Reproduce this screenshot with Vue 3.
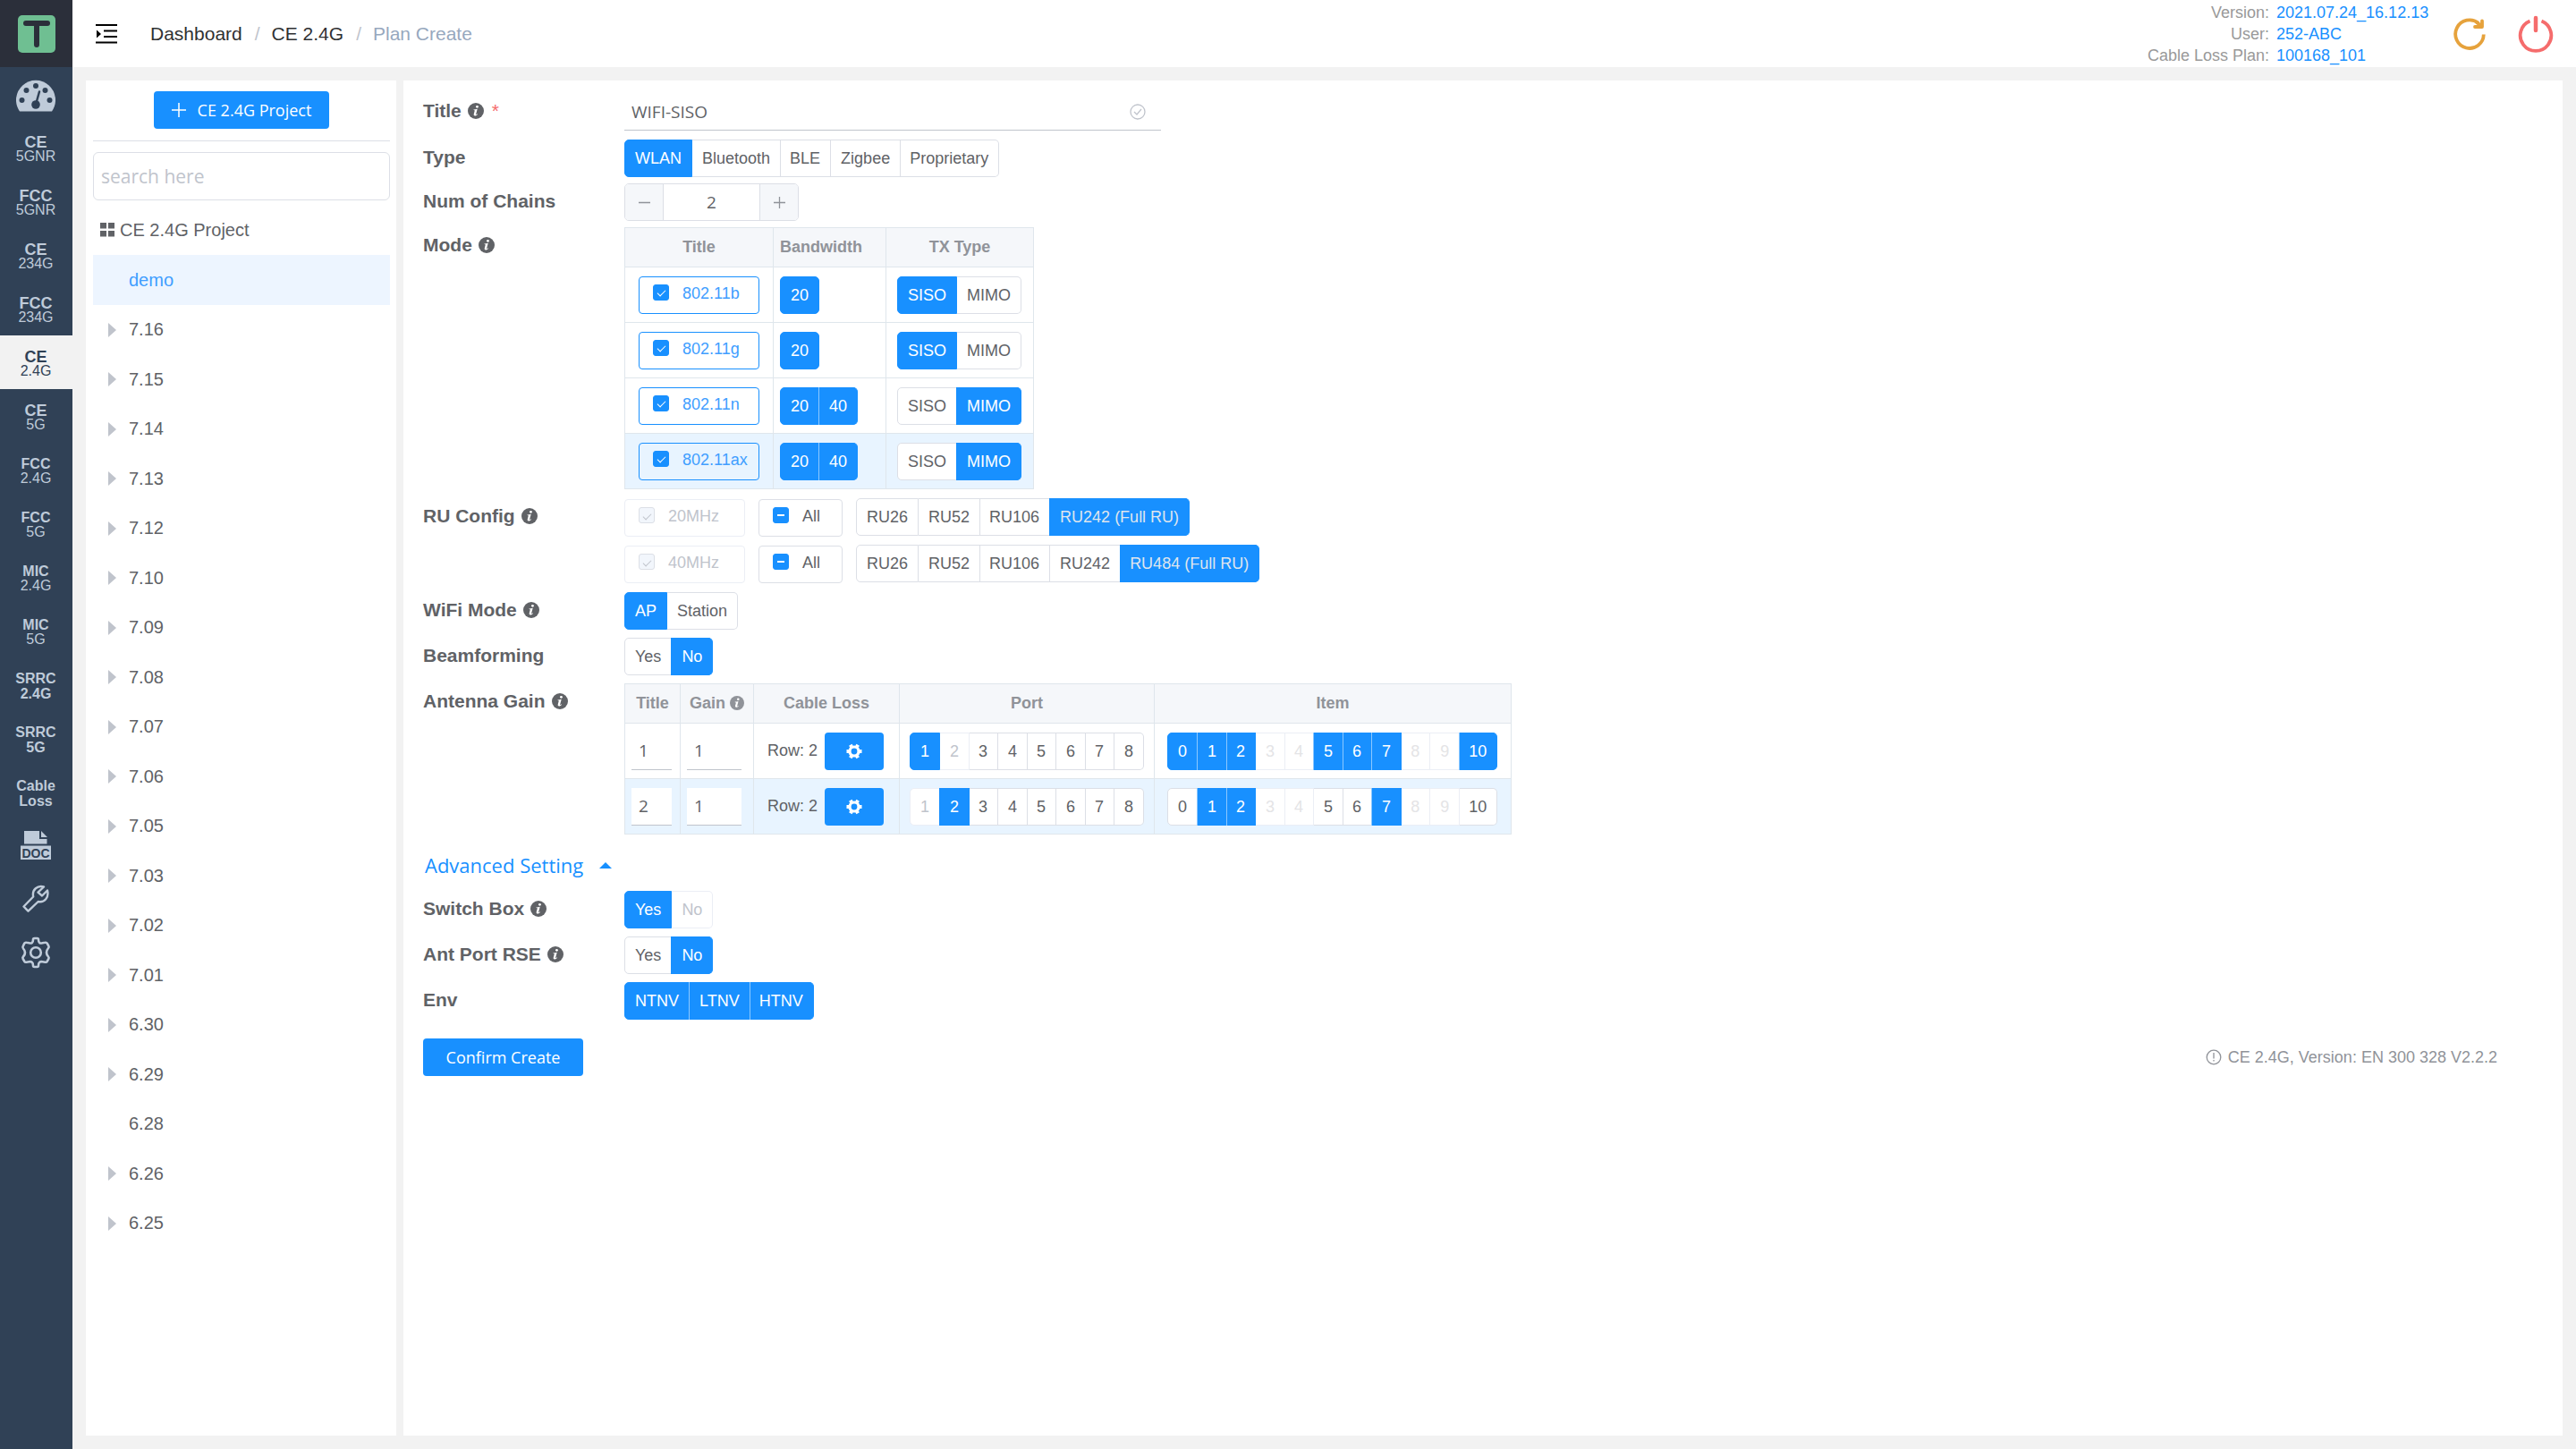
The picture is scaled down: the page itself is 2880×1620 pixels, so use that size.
<script setup>
import { h, ref } from 'vue'

const Segments = (props) =>
  h(
    'div',
    { class: ['seg', props.multi ? 'seg-multi' : 'seg-single'], role: 'group', 'aria-label': props.name },
    props.options.map((o) =>
      h('label', { class: ['seg-item', o.on && 'is-on', o.off && 'is-off', o.pale && 'is-pale', o.dim && 'is-dim'] }, [
        h('input', {
          type: props.multi ? 'checkbox' : 'radio',
          name: props.name,
          checked: !!o.on,
          disabled: !!(o.off || o.pale),
        }),
        h('span', o.t),
      ])
    )
  )
Segments.props = { name: String, options: Array, multi: Boolean }

const InfoIcon = () =>
  h('svg', { class: 'info', viewBox: '0 0 20 20', 'aria-hidden': 'true' }, [
    h('circle', { cx: 10, cy: 10, r: 10, fill: 'currentColor' }),
    h('circle', { cx: 11.6, cy: 4.8, r: 1.6, fill: '#fff' }),
    h('path', {
      d: 'M7.2 8.200c1.700 0 3-.4 4.700-.8L10.200 14c-.2.9.6.7 1.600-.4l.5.5c-2.200 2.700-5.500 2.500-4.800-.2l1-3.900c.2-.8-.3-1-1.300-1z',
      fill: '#fff',
    }),
  ])

const opts = (texts, on = [], off = [], kind = 'off') =>
  texts.map((t) => ({ t, on: on.includes(t), [kind]: off.includes(t) }))

const menu = [
  { a: 'CE', b: '5GNR', k: 'big' },
  { a: 'FCC', b: '5GNR', k: 'big' },
  { a: 'CE', b: '234G', k: 'big' },
  { a: 'FCC', b: '234G', k: 'big' },
  { a: 'CE', b: '2.4G', k: 'big', active: true },
  { a: 'CE', b: '5G', k: 'big' },
  { a: 'FCC', b: '2.4G', k: 'mid' },
  { a: 'FCC', b: '5G', k: 'mid' },
  { a: 'MIC', b: '2.4G', k: 'mid' },
  { a: 'MIC', b: '5G', k: 'mid' },
  { a: 'SRRC', b: '2.4G', k: 'bold' },
  { a: 'SRRC', b: '5G', k: 'bold' },
  { a: 'Cable', b: 'Loss', k: 'bold' },
]

const tree = [
  'demo', '7.16', '7.15', '7.14', '7.13', '7.12', '7.10', '7.09', '7.08', '7.07',
  '7.06', '7.05', '7.03', '7.02', '7.01', '6.30', '6.29', '6.28', '6.26', '6.25',
]
const leaves = ['demo', '6.28']

const title = ref('WIFI-SISO')
const chains = ref(2)
const types = opts(['WLAN', 'Bluetooth', 'BLE', 'Zigbee', 'Proprietary'], ['WLAN'])

const modes = [
  { name: '802.11b', bw: ['20'], tx: 'SISO' },
  { name: '802.11g', bw: ['20'], tx: 'SISO' },
  { name: '802.11n', bw: ['20', '40'], tx: 'MIMO' },
  { name: '802.11ax', bw: ['20', '40'], tx: 'MIMO', current: true },
]

const ru = [
  { bw: '20MHz', list: [...opts(['RU26', 'RU52', 'RU106']), { t: 'RU242 (Full RU)', on: true, dim: true }] },
  { bw: '40MHz', list: [...opts(['RU26', 'RU52', 'RU106', 'RU242']), { t: 'RU484 (Full RU)', on: true, dim: true }] },
]

const ports = ['1', '2', '3', '4', '5', '6', '7', '8']
const items = ['0', '1', '2', '3', '4', '5', '6', '7', '8', '9', '10']
const pale = ['3', '4', '8', '9']
const antennas = ref([
  { title: '1', gain: '1', port: opts(ports, ['1'], ['2']), item: opts(items, ['0', '1', '2', '5', '6', '7', '10'], pale, 'pale') },
  { title: '2', gain: '1', current: true, port: opts(ports, ['2'], ['1']), item: opts(items, ['1', '2', '7'], pale, 'pale') },
])
</script>

<template>
  <div class="app">
    <nav class="sidebar">
      <a class="logo" href="#" aria-label="Home">
        <svg width="42" height="42" viewBox="0 0 42 42">
          <rect width="42" height="42" rx="5" fill="#6fbf92" />
          <path d="M9 9h24M21 9v24" stroke="#2b2f3a" stroke-width="6" stroke-linecap="round" fill="none" />
        </svg>
      </a>
      <a class="item dash" href="#" aria-label="Dashboard">
        <svg width="44" height="36" viewBox="0 0 44 36">
          <path d="M4 35.500A22 22 0 1 1 40 35.500z" fill="#bfcbd9" />
          <g fill="#304156">
            <circle cx="22" cy="7" r="3" /><circle cx="11.500" cy="12" r="3" /><circle cx="32.500" cy="12" r="3" />
            <circle cx="6.500" cy="23" r="3" /><circle cx="37.500" cy="23" r="3" /><circle cx="22" cy="28" r="4.800" />
          </g>
          <path d="M22.500 26L26 13.500" stroke="#304156" stroke-width="2.500" stroke-linecap="round" />
        </svg>
      </a>
      <a v-for="m in menu" :key="m.a + m.b" href="#" class="item" :class="[m.k, { active: m.active }]">
        <b>{{ m.a }}</b><span>{{ m.b }}</span>
      </a>
      <a class="item" href="#" aria-label="Documents">
        <svg width="34" height="34" viewBox="0 0 34 34">
          <path d="M4 1h17v9h8.500v5.500H4zM23 1l7 7h-7z" fill="#bfcbd9" />
          <rect y="17.500" width="34" height="15.500" fill="#bfcbd9" />
          <text x="17" y="30.500" text-anchor="middle" class="doc">DOC</text>
        </svg>
      </a>
      <a class="item" href="#" aria-label="Tools">
        <svg width="32" height="32" viewBox="0 0 32 32" fill="none" stroke="#bfcbd9" stroke-width="2.400" stroke-linejoin="round">
          <path d="M25 2.500c-7-2-13.500 3-11.800 11L2.500 24.500l5 5.200L18.700 19c7 1.500 12.300-4.500 10.300-12.500L23 12.500l-4.500-3.800z" />
        </svg>
      </a>
      <a class="item" href="#" aria-label="Settings">
        <svg width="34" height="36" viewBox="0 0 34 36" fill="none" stroke="#bfcbd9" stroke-width="2.600" stroke-linejoin="round">
          <circle cx="17" cy="18" r="5.800" />
          <path d="M14 3.500Q14 2 15.500 2h3Q20 2 20 3.500q0 5 4.500 3.800l3-.5q1.500-.3 2.300 1l1.500 2.700q.8 1.300-.3 2.500Q27 18 31 22.500q1.100 1.200.3 2.500l-1.500 2.700q-.8 1.300-2.300 1l-3-.5Q20 27.500 20 32.500q0 1.500-1.500 1.500h-3Q14 34 14 32.500q0-5-4.500-4.300l-3 .5q-1.500.3-2.300-1L2.700 25q-.8-1.300.3-2.500Q7 18 3 13.500 1.900 12.300 2.700 11l1.500-3.200q.8-1.300 2.300-1l3 .5Q14 8.500 14 3.500z" />
        </svg>
      </a>
    </nav>

    <div class="page">
      <header class="topbar">
        <button class="plain" type="button" aria-label="Toggle menu">
          <svg width="24" height="24" viewBox="0 0 24 24">
            <path d="M0 2h24M9 8.500h15M9 15h15M0 21.500h24" stroke="#000" stroke-width="2" />
            <path d="M1 7.500v9l5-4.500z" />
          </svg>
        </button>
        <div class="crumbs">
          <a href="#">Dashboard</a><i>/</i><a href="#">CE 2.4G</a><i>/</i><span>Plan Create</span>
        </div>
        <dl class="meta">
          <dt>Version:</dt><dd>2021.07.24_16.12.13</dd>
          <dt>User:</dt><dd>252-ABC</dd>
          <dt>Cable Loss Plan:</dt><dd>100168_101</dd>
        </dl>
        <button class="plain" type="button" aria-label="Reload">
          <svg width="36" height="36" viewBox="0 0 36 36" fill="none" stroke="#e6a23c" stroke-width="3.800" stroke-linecap="round">
            <path d="M33.800 18.500A15.800 15.800 0 1 1 28 5.900" stroke-linecap="butt" />
            <path d="M24 10h8V3.500M26 5l5 4" stroke-linejoin="round" />
          </svg>
        </button>
        <button class="plain" type="button" aria-label="Log out">
          <svg width="40" height="42" viewBox="0 0 40 42" fill="none" stroke="#f56c6c" stroke-width="3.800">
            <path d="M13.500 6.500A17.300 17.300 0 1 0 26.500 6.500" />
            <path d="M20 3v14" stroke-linecap="round" stroke-width="4.500" />
          </svg>
        </button>
      </header>

      <div class="content">
        <aside class="panel side">
          <div class="side-top">
            <button class="primary add" type="button">
              <svg width="16" height="16" viewBox="0 0 16 16"><path d="M8 0v16M0 8h16" stroke="#fff" stroke-width="1.500" /></svg>
              CE 2.4G Project
            </button>
          </div>
          <input class="search" type="text" placeholder="search here" aria-label="search here" />
          <div class="root">
            <svg width="16" height="16" viewBox="0 0 16 16"><path d="M0 0h7v6.500H0zM9 0h7v6.500H9zM0 9h7v6.500H0zM9 9h7v6.500H9z" fill="#606266" /></svg>
            CE 2.4G Project
          </div>
          <ul class="tree">
            <li v-for="t in tree" :key="t" :class="{ current: t === 'demo' }">
              <span class="arrow" :class="{ leaf: leaves.includes(t) }"></span>{{ t }}
            </li>
          </ul>
        </aside>

        <main class="panel main">
          <form @submit.prevent>
            <div class="row wide">
              <label class="name" for="title">Title <InfoIcon /> <em>*</em></label>
              <div class="title-box">
                <input id="title" v-model="title" type="text" />
                <svg width="18" height="18" viewBox="0 0 18 18" fill="none" stroke="#c0c4cc" stroke-width="1.300"><circle cx="9" cy="9" r="8" /><path d="M5 9l3 3 5-6" /></svg>
              </div>
            </div>
            <div class="row tight">
              <div class="name">Type</div>
              <Segments name="type" :options="types" />
            </div>
            <div class="row tight">
              <label class="name" for="chains">Num of Chains</label>
              <div class="stepper">
                <button type="button" aria-label="Decrease"><svg width="13" height="13" viewBox="0 0 13 13"><path d="M0 6.500h13" /></svg></button>
                <input id="chains" v-model="chains" type="text" />
                <button type="button" aria-label="Increase"><svg width="13" height="13" viewBox="0 0 13 13"><path d="M0 6.500h13M6.500 0v13" /></svg></button>
              </div>
            </div>
            <div class="row wide">
              <div class="name">Mode <InfoIcon /></div>
              <table class="modes">
                <colgroup><col class="c166" /><col class="c126" /><col class="c165" /></colgroup>
                <thead><tr><th>Title</th><th class="left">Bandwidth</th><th>TX Type</th></tr></thead>
                <tbody>
                  <tr v-for="m in modes" :key="m.name" :class="{ current: m.current }">
                    <td class="p15">
                      <label class="tick on"><input type="checkbox" checked />{{ m.name }}</label>
                    </td>
                    <td class="p7"><Segments :name="'bw-' + m.name" multi :options="opts(m.bw, m.bw)" /></td>
                    <td class="p12"><Segments :name="'tx-' + m.name" :options="opts(['SISO', 'MIMO'], [m.tx])" /></td>
                  </tr>
                </tbody>
              </table>
            </div>
            <div class="row wide">
              <div class="name">RU Config <InfoIcon /></div>
              <div class="ru">
                <div v-for="r in ru" :key="r.bw" class="ru-line">
                  <label class="tick off"><input type="checkbox" checked disabled />{{ r.bw }}</label>
                  <label class="tick all"><input type="checkbox" class="part" :indeterminate="true" />All</label>
                  <Segments :name="'ru-' + r.bw" multi :options="r.list" />
                </div>
              </div>
            </div>
            <div class="row">
              <div class="name">WiFi Mode <InfoIcon /></div>
              <Segments name="wifi" :options="opts(['AP', 'Station'], ['AP'])" />
            </div>
            <div class="row">
              <div class="name">Beamforming</div>
              <Segments name="beam" :options="opts(['Yes', 'No'], ['No'])" />
            </div>
            <div class="row">
              <div class="name">Antenna Gain <InfoIcon /></div>
              <table class="antennas">
                <colgroup><col class="c62" /><col class="c82" /><col class="c163" /><col class="c285" /><col class="c399" /></colgroup>
                <thead><tr><th>Title</th><th>Gain <InfoIcon /></th><th>Cable Loss</th><th>Port</th><th>Item</th></tr></thead>
                <tbody>
                  <tr v-for="(a, n) in antennas" :key="n" :class="{ current: a.current }">
                    <td class="p7"><input v-model="a.title" class="line w45" type="text" aria-label="Title" /></td>
                    <td class="p7"><input v-model="a.gain" class="line w61" type="text" aria-label="Gain" /></td>
                    <td class="p15">
                      <div class="loss">
                        Row: 2
                        <button class="primary gear" type="button" aria-label="Edit cable loss">
                          <svg width="18" height="18" viewBox="0 0 18 18" fill="none" stroke="#fff">
                            <circle cx="9" cy="9" r="5" stroke-width="3.200" />
                            <path d="M12 3.800l1.200-2M15 9h2.500M12 14.200l1.200 2M6 14.200l-1.200 2M3 9H.5M6 3.800L4.800 1.800" stroke-width="4" />
                          </svg>
                        </button>
                      </div>
                    </td>
                    <td class="p11"><Segments :name="'port-' + n" :options="a.port" /></td>
                    <td class="p14"><Segments :name="'item-' + n" multi :options="a.item" /></td>
                  </tr>
                </tbody>
              </table>
            </div>
            <button class="advanced" type="button">Advanced Setting <span class="caret"></span></button>
            <div class="row">
              <div class="name">Switch Box <InfoIcon /></div>
              <Segments name="switch" :options="opts(['Yes', 'No'], ['Yes'], ['No'])" />
            </div>
            <div class="row">
              <div class="name">Ant Port RSE <InfoIcon /></div>
              <Segments name="rse" :options="opts(['Yes', 'No'], ['No'])" />
            </div>
            <div class="row">
              <div class="name">Env</div>
              <Segments name="env" multi :options="opts(['NTNV', 'LTNV', 'HTNV'], ['NTNV', 'LTNV', 'HTNV'])" />
            </div>
            <div class="bottom">
              <button class="primary confirm" type="submit">Confirm Create</button>
              <p class="note">
                <svg width="18" height="18" viewBox="0 0 18 18" fill="none" stroke="#909399" stroke-width="1.300"><circle cx="9" cy="9" r="7.800" /><path d="M9 4v6.500M9 12v1.500" /></svg>
                CE 2.4G, Version: EN 300 328 V2.2.2
              </p>
            </div>
          </form>
        </main>
      </div>
    </div>
  </div>
</template>

<style>
body {
  margin: 0;
}
.seg {
  display: flex;
}
.seg-item {
  box-sizing: border-box;
  height: 42px;
  padding: 0 11px 0 10px;
  border: 1px solid #dcdfe6;
  border-left-width: 0;
  background: #fff;
  color: #606266;
  font-size: 18px;
  line-height: 40px;
  white-space: nowrap;
}
.seg-item:nth-child(even) {
  padding-left: 11px;
}
.seg-item:first-child {
  padding-left: 11px;
  border-left-width: 1px;
  border-radius: 5px 0 0 5px;
}
.seg-item:last-child {
  border-radius: 0 5px 5px 0;
}
.seg-item:only-child {
  border-radius: 5px;
}
.seg-item input {
  position: absolute;
  opacity: 0;
  margin: 0;
}
.seg-item.is-off {
  color: #c0c4cc;
  border-color: #ebeef5;
}
.seg-item.is-pale {
  color: #e4e4e6;
  border-color: #ebeef5;
}
.seg-item.is-on {
  background: #1890ff;
  border-color: #1890ff;
  color: #fff;
  box-shadow: -1px 0 0 0 #1890ff;
}
.seg-multi .seg-item.is-on {
  box-shadow: -1px 0 0 0 #8cc8ff;
}
.seg .seg-item.is-on:first-child {
  box-shadow: none;
}
.seg .seg-item.is-dim {
  color: #dfe5ee;
  box-shadow: -1px 0 0 0 #1890ff;
}
</style>

<style scoped>
.app {
  display: flex;
  min-height: 100vh;
  background: #f2f2f2;
  font-family: 'Liberation Sans', Arial, sans-serif;
  font-size: 18px;
  color: #606266;
}
a {
  text-decoration: none;
}
button,
input {
  font-family: 'Open Sans', 'Noto Sans', sans-serif;
  font-size: 18px;
  box-sizing: border-box;
}
.sidebar {
  flex: none;
  width: 81px;
  background: #304156;
}
.logo {
  display: flex;
  align-items: center;
  justify-content: center;
  height: 75px;
  background: #2b2f3a;
}
.item {
  box-sizing: border-box;
  display: flex;
  flex-direction: column;
  align-items: center;
  justify-content: center;
  height: 60px;
  padding-right: 1px;
  color: #bfcbd9;
  font-size: 16px;
  line-height: 16px;
}
.item.dash,
.item.big,
.item.mid,
.item.bold {
  padding-top: 4px;
}
.item.big b {
  font-size: 18px;
}
.item.bold {
  font-weight: bold;
  line-height: 17px;
}
.item.active {
  background: #f2f2f2;
  color: #304156;
}
.doc {
  font-size: 14px;
  font-weight: bold;
  fill: #304156;
}
.page {
  flex: 1;
  min-width: 0;
  display: flex;
  flex-direction: column;
}
.topbar {
  display: flex;
  align-items: center;
  height: 75px;
  padding: 0 25px 0 26px;
  background: #fff;
}
.plain {
  display: flex;
  padding: 0;
  border: 0;
  background: none;
}
.crumbs {
  display: flex;
  margin-left: 37px;
  font-size: 21px;
}
.crumbs a {
  color: #303133;
}
.crumbs i {
  margin: 0 13px 0 14px;
  color: #c0c4cc;
  font-style: normal;
}
.crumbs span {
  color: #97a8be;
}
.meta {
  display: grid;
  grid-template-columns: auto 171px;
  column-gap: 8px;
  margin: 0 27px 0 auto;
  line-height: 24px;
}
.meta dt {
  text-align: right;
  color: #999;
}
.meta dd {
  margin: 0;
  color: #1890ff;
}
.meta + .plain {
  margin-right: 36px;
}
.content {
  flex: 1;
  display: flex;
  gap: 8px;
  padding: 15px;
}
.panel {
  background: #fff;
}
.side {
  flex: none;
  box-sizing: border-box;
  width: 347px;
  padding: 12px 7px 12px 8px;
}
.side-top {
  display: flex;
  justify-content: center;
  padding-bottom: 13px;
  border-bottom: 1px solid #dcdfe6;
}
.primary {
  display: flex;
  align-items: center;
  justify-content: center;
  height: 42px;
  padding: 0;
  border: 0;
  border-radius: 4px;
  background: #1890ff;
  color: #fff;
}
.add {
  width: 196px;
  gap: 13px;
}
.search {
  display: block;
  width: 100%;
  height: 54px;
  margin: 12px 0 5px;
  padding: 0 8px;
  border: 1px solid #dcdfe6;
  border-radius: 6px;
  font-size: 21px;
  outline: none;
}
.search::placeholder {
  color: #c0c4cc;
}
.root {
  display: flex;
  align-items: center;
  gap: 6px;
  height: 56px;
  padding-left: 8px;
  font-size: 20px;
}
.tree {
  margin: 0;
  padding: 0;
  list-style: none;
  font-size: 20px;
}
.tree li {
  display: flex;
  align-items: center;
  height: 56px;
  padding-left: 17px;
}
.tree li:nth-child(even) {
  height: 55px;
}
.tree .current {
  background: #edf5ff;
  color: #409eff;
}
.arrow {
  margin-right: 14px;
  border: 8px solid transparent;
  border-left: 9px solid #c0c4cc;
  border-right: 0;
}
.arrow.leaf {
  visibility: hidden;
}
.main {
  flex: 1;
  min-width: 0;
  padding: 14px 22px;
}
.row {
  display: flex;
  align-items: flex-start;
  margin-bottom: 9px;
}
.row.tight {
  margin-bottom: 7px;
}
.row.wide {
  margin-bottom: 10px;
}
.name {
  display: flex;
  align-items: center;
  gap: 7px;
  flex: none;
  width: 225px;
  font-size: 21px;
  font-weight: bold;
  line-height: 40px;
}
.info {
  flex: none;
  width: 18px;
  height: 18px;
}
.name em {
  margin-left: 2px;
  color: #f56c6c;
  font-size: 21px;
  font-weight: normal;
  font-style: normal;
}
.title-box {
  display: flex;
  align-items: center;
  box-sizing: border-box;
  width: 600px;
  height: 42px;
  padding-right: 17px;
  border-bottom: 1px solid #c0c4cc;
}
.title-box input {
  flex: 1;
  padding: 0 8px;
  border: 0;
  color: #606266;
  font-size: 19px;
  outline: none;
}
.stepper {
  display: flex;
  box-sizing: border-box;
  width: 195px;
  height: 42px;
  border: 1px solid #dcdfe6;
  border-radius: 5px;
  overflow: hidden;
}
.stepper button {
  display: flex;
  align-items: center;
  justify-content: center;
  flex: none;
  width: 42px;
  padding: 0;
  border: 0;
  background: #f5f7fa;
}
.stepper path {
  stroke: #909399;
  stroke-width: 1.300;
}
.stepper input {
  flex: 1;
  min-width: 0;
  padding: 0;
  border: 1px solid #dcdfe6;
  border-width: 0 1px;
  color: #606266;
  font-size: 19px;
  text-align: center;
  outline: none;
}
table {
  table-layout: fixed;
  border: 1px solid #dfe6ec;
  border-width: 1px 0 0 1px;
  border-spacing: 0;
}
.modes {
  width: 458px;
}
.antennas {
  width: 992px;
}
.c62 { width: 62px; }
.c82 { width: 82px; }
.c126 { width: 126px; }
.c163 { width: 163px; }
.c165 { width: 165px; }
.c166 { width: 166px; }
.c285 { width: 285px; }
.c399 { width: 399px; }
th,
td {
  box-sizing: border-box;
  padding: 0;
  border: 1px solid #dfe6ec;
  border-width: 0 1px 1px 0;
}
th {
  height: 44px;
  background: #f5f7fa;
  color: #909399;
  text-align: center;
}
th.left {
  padding-left: 7px;
  text-align: left;
}
th .info {
  width: 16px;
  height: 16px;
  vertical-align: -2px;
}
td {
  height: 62px;
}
.current td {
  background: #e8f4ff;
}
.p7 { padding-left: 7px; }
.p11 { padding-left: 11px; }
.p12 { padding-left: 12px; }
.p14 { padding-left: 14px; }
.p15 { padding-left: 15px; }
.tick {
  display: flex;
  box-sizing: border-box;
  width: 135px;
  height: 42px;
  padding: 8px 0 0 15px;
  border: 1px solid #dcdfe6;
  border-radius: 4px;
  line-height: 20px;
}
.tick.on {
  border-color: #1890ff;
  color: #409eff;
}
.tick.off {
  border-color: #ebeef5;
  color: #c0c4cc;
}
.tick.all {
  width: 94px;
}
.ru .tick {
  margin-top: 1px;
}
.tick input {
  appearance: none;
  flex: none;
  display: grid;
  place-items: center;
  width: 18px;
  height: 18px;
  margin: 0 15px 0 0;
  border: 1px solid #1890ff;
  border-radius: 3px;
  background: #1890ff;
}
.tick.off input {
  border-color: #dcdfe6;
  background: #f2f6fc;
}
.tick input::after {
  content: '';
  width: 4px;
  height: 8px;
  border: 1px solid #fff;
  border-width: 0 1px 1px 0;
  transform: rotate(45deg);
}
.tick.off input::after {
  border-color: #c0c4cc;
}
.tick input.part::after {
  width: 8px;
  height: 2px;
  border: 0;
  background: #fff;
  transform: none;
}
.ru {
  display: flex;
  flex-direction: column;
  gap: 9px;
}
.ru-line {
  display: flex;
  gap: 15px;
}
.line {
  display: block;
  height: 42px;
  padding: 0 8px;
  border: 0;
  border-bottom: 1px solid #c0c4cc;
  color: #606266;
  font-size: 19px;
  outline: none;
}
.w45 { width: 45px; }
.w61 { width: 61px; }
.loss {
  display: flex;
  align-items: center;
  gap: 8px;
}
.gear {
  width: 66px;
}
.advanced {
  display: flex;
  align-items: center;
  gap: 18px;
  height: 42px;
  margin: 13px 0 8px;
  padding: 0 2px;
  border: 0;
  background: none;
  color: #1890ff;
  font-size: 22px;
}
.caret {
  border: 7px solid transparent;
  border-top: 0;
  border-bottom: 7px solid #1890ff;
}
.bottom {
  display: flex;
  align-items: center;
  justify-content: space-between;
  margin-top: 21px;
}
.confirm {
  width: 179px;
}
.note {
  display: flex;
  align-items: center;
  gap: 7px;
  margin: 0 51px 0 0;
  color: #909399;
}
</style>
